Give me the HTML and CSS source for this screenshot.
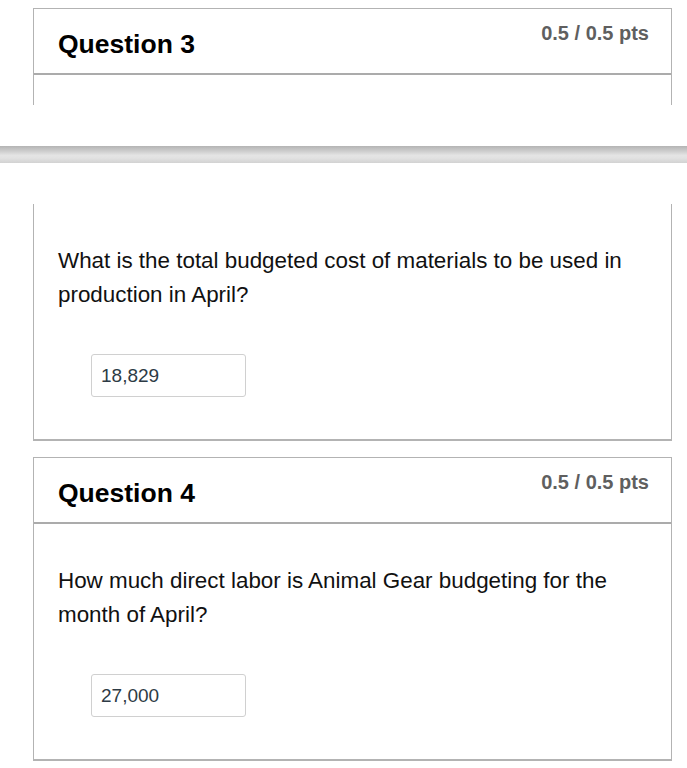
FILE: index.html
```html
<!DOCTYPE html>
<html>
<head>
<meta charset="utf-8">
<link rel="stylesheet" href="styles.css">
</head>
<body>
  <div class="quiz-card card-first">
    <div class="card-header">
      <h2 class="card-title">Question 3</h2>
      <span class="card-pts">0.5 / 0.5 pts</span>
    </div>
    <div class="card-body card-body-cut"></div>
  </div>

  <div class="page-break"></div>

  <div class="quiz-card card-cont">
    <div class="card-body">
      <p class="card-text">What is the total budgeted cost of materials to be used in production in April?</p>
      <div class="answer-box">18,829</div>
    </div>
  </div>

  <div class="quiz-card">
    <div class="card-header">
      <h2 class="card-title">Question 4</h2>
      <span class="card-pts">0.5 / 0.5 pts</span>
    </div>
    <div class="card-body">
      <p class="card-text">How much direct labor is Animal Gear budgeting for the month of April?</p>
      <div class="answer-box">27,000</div>
    </div>
  </div>
</body>
</html>
```

FILE: styles.css
```css
html, body {
  margin: 0;
  padding: 0;
  background: #ffffff;
}

body {
  font-family: "Liberation Sans", Arial, sans-serif;
  color: #000;
  padding-top: 8px;
}

.quiz-card {
  margin-left: 33px;
  width: 639px;
  box-sizing: border-box;
  border: 1px solid #b3b3b3;
  border-bottom: 2px solid #b3b3b3;
  margin-bottom: 16px;
}

.card-first {
  border-bottom: none;
  margin-bottom: 41px;
}

.card-cont {
  border-top: none;
}

.card-header {
  display: flex;
  justify-content: space-between;
  align-items: flex-start;
  height: 66px;
  box-sizing: border-box;
  padding: 0 22px 0 24px;
  border-bottom: 2px solid #ababab;
}

.card-title {
  margin: 20px 0 0 0;
  font-size: 26.5px;
  line-height: 30px;
  font-weight: bold;
  color: #000;
}

.card-pts {
  margin-top: 13px;
  font-size: 20px;
  line-height: 22px;
  font-weight: bold;
  color: #5f5f5f;
}

.card-body {
  padding: 40px 24px 42px 24px;
}

.card-body-cut {
  padding: 0;
  height: 30px;
}

.card-text {
  margin: 0;
  font-size: 22.4px;
  line-height: 34px;
  color: #111;
}

.answer-box {
  margin: 42px 0 0 33px;
  width: 155px;
  height: 43px;
  box-sizing: border-box;
  border: 1px solid #d0d0d0;
  border-radius: 3px;
  padding: 0 9px;
  font-size: 19px;
  line-height: 41px;
  color: #2d3b45;
}

.page-break {
  height: 17px;
  margin-bottom: 41px;
  background: linear-gradient(to bottom, #b4b4b4 0%, #cdcdcd 30%, #e4e4e4 55%, #e2e2e2 70%, #d2d2d2 100%);
}
```
